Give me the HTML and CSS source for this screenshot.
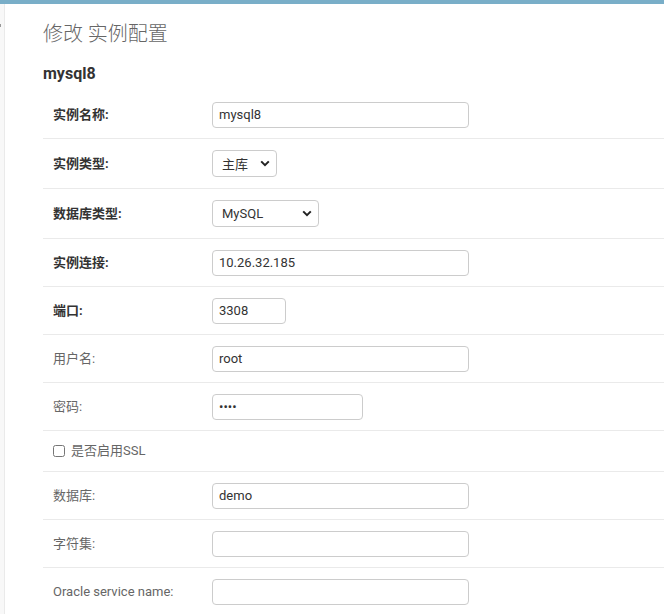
FILE: index.html
```html
<!DOCTYPE html>
<html lang="zh">
<head>
<meta charset="utf-8">
<title>修改 实例配置</title>
<link rel="stylesheet" href="styles.css">
</head>
<body>
<div class="topbar"></div>
<div class="main">
  <div class="sidebar-edge"><span class="tick"></span></div>
  <div class="content">
    <h1>修改 实例配置</h1>
    <h2>mysql8</h2>
    <div class="form-row">
      <label class="required">实例名称:</label>
      <input class="field w-wide" type="text" value="mysql8">
    </div>
    <div class="form-row sel-row">
      <label class="required">实例类型:</label>
      <div class="select w-type"><span>主库</span><svg width="10" height="7" viewBox="0 0 10 7"><path d="M1.2 1.4 L5 5.2 L8.8 1.4" fill="none" stroke="#222" stroke-width="2"/></svg></div>
    </div>
    <div class="form-row sel-row">
      <label class="required">数据库类型:</label>
      <div class="select w-db"><span>MySQL</span><svg width="10" height="7" viewBox="0 0 10 7"><path d="M1.2 1.4 L5 5.2 L8.8 1.4" fill="none" stroke="#222" stroke-width="2"/></svg></div>
    </div>
    <div class="form-row">
      <label class="required">实例连接:</label>
      <input class="field w-wide" type="text" value="10.26.32.185">
    </div>
    <div class="form-row">
      <label class="required">端口:</label>
      <input class="field w-port" type="text" value="3308">
    </div>
    <div class="form-row">
      <label>用户名:</label>
      <input class="field w-wide" type="text" value="root">
    </div>
    <div class="form-row">
      <label>密码:</label>
      <input class="field w-pass" type="password" value="root">
    </div>
    <div class="form-row check-row">
      <input class="check" type="checkbox">
      <label class="check-label">是否启用SSL</label>
    </div>
    <div class="form-row">
      <label>数据库:</label>
      <input class="field w-wide" type="text" value="demo">
    </div>
    <div class="form-row">
      <label>字符集:</label>
      <input class="field w-wide" type="text" value="">
    </div>
    <div class="form-row">
      <label>Oracle service name:</label>
      <input class="field w-wide" type="text" value="">
    </div>
  </div>
</div>
</body>
</html>
```
FILE: styles.css
```css
html, body {
  margin: 0;
  padding: 0;
  background: #fff;
  font-family: Roboto, "Noto Sans CJK SC", "DejaVu Sans", sans-serif;
  font-size: 13px;
  color: #333;
}
.topbar {
  height: 4px;
  background: #79aec8;
}
.main {
  display: flex;
  min-height: 610px;
}
.sidebar-edge {
  width: 4px;
  flex: none;
  background: #f8f8f8;
  border-right: 1px solid #eaeaea;
  position: relative;
}
.tick {
  position: absolute;
  left: 0;
  top: 20px;
  width: 1px;
  height: 3px;
  background: #999;
}
.content {
  flex: 1;
  padding: 18px 0 0 38px;
}
h1 {
  margin: 0 0 18px;
  font-size: 20px;
  font-weight: 300;
  color: #666;
  line-height: 24px;
}
h2 {
  margin: 0 0 8px;
  font-size: 16px;
  font-weight: 700;
  color: #333;
  line-height: 19px;
}
.form-row {
  display: flex;
  align-items: center;
  padding: 10px;
  min-height: 27px;
  border-bottom: 1px solid #eaeaea;
}
.sel-row {
  min-height: 29px;
}
.check-row {
  min-height: 20px;
}
label {
  width: 160px;
  flex: none;
  color: #666;
  line-height: 16px;
}
label.required {
  font-weight: 700;
  color: #333;
}
.field {
  box-sizing: border-box;
  height: 26px;
  margin: 0 0 0 -1px;
  padding: 5px 6px;
  border: 1px solid #ccc;
  border-radius: 4px;
  font-family: Roboto, "Noto Sans CJK SC", sans-serif;
  font-size: 13px;
  color: #333;
  background: #fff;
  outline: none;
}
.w-wide { width: 257px; }
.w-port { width: 74px; }
.w-pass { width: 151px; }
.select {
  box-sizing: border-box;
  display: flex;
  align-items: center;
  justify-content: space-between;
  height: 27px;
  margin-left: -1px;
  padding: 0 6px 0 9px;
  border: 1px solid #ccc;
  border-radius: 4px;
  color: #333;
  font-size: 13px;
}
.w-type { width: 65px; }
.w-db { width: 107px; }
.check {
  margin: 0 6px 0 0;
  width: 12px;
  height: 12px;
}
.check-label {
  width: auto;
}
```
